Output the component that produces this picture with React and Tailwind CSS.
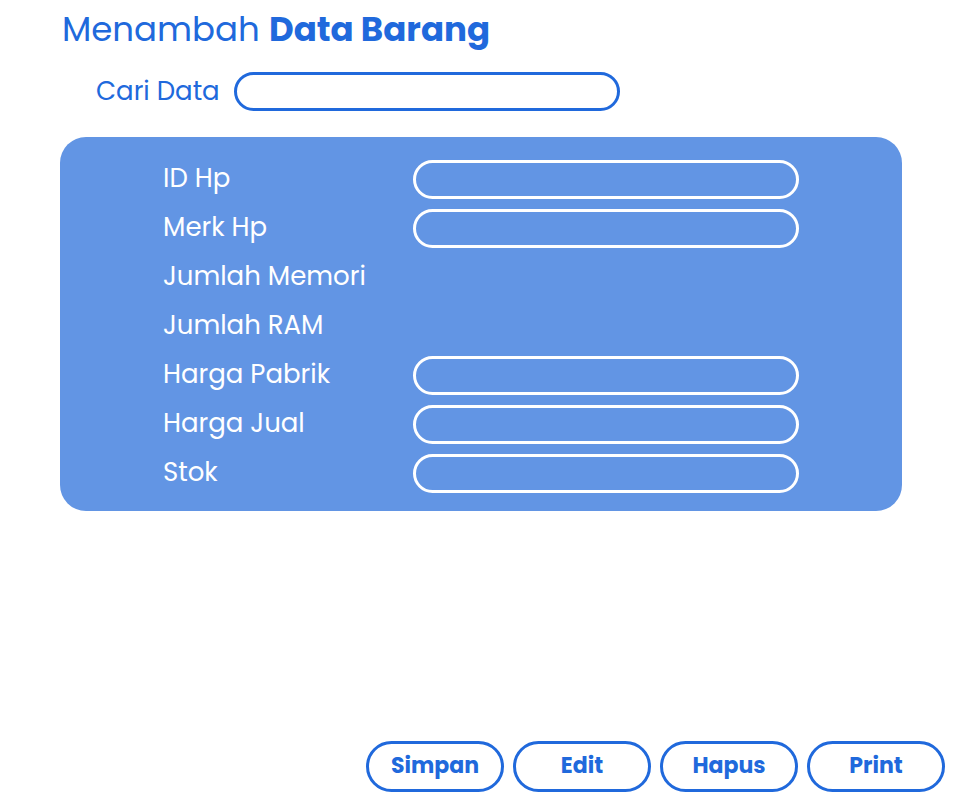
const fields = [
  { id: "id-hp", label: "ID Hp", input: true },
  { id: "merk-hp", label: "Merk Hp", input: true },
  { id: "memori", label: "Jumlah Memori", input: false },
  { id: "ram", label: "Jumlah RAM", input: false },
  { id: "harga-pabrik", label: "Harga Pabrik", input: true },
  { id: "harga-jual", label: "Harga Jual", input: true },
  { id: "stok", label: "Stok", input: true },
];

const actions = ["Simpan", "Edit", "Hapus", "Print"];

function Field({ id, label, input }) {
  return (
    <div className="grid h-[39px] grid-cols-[250px_1fr] items-center">
      {input ? (
        <>
          <label htmlFor={id} className="pb-1 text-[26px] leading-8">
            {label}
          </label>
          <input
            id={id}
            type="text"
            className="h-[39px] w-full min-w-0 rounded-[20px] border-3 border-white bg-transparent px-4 text-xl outline-none"
          />
        </>
      ) : (
        <span className="pb-1 text-[26px] leading-8">{label}</span>
      )}
    </div>
  );
}

export default function App() {
  return (
    <main className="flex min-h-screen flex-col bg-white font-['Poppins','Inter',sans-serif] text-[#2069dc]">
      <h1 className="px-[62px] pt-2 text-[34px] leading-[42px] font-normal">
        Menambah <strong className="font-bold">Data Barang</strong>
      </h1>

      <div className="mt-[22px] flex items-center pr-[60px] pl-24">
        <label htmlFor="cari" className="w-[138px] shrink-0 pb-0.5 text-[26px] leading-8">
          Cari Data
        </label>
        <input
          id="cari"
          type="search"
          className="h-[39px] w-full max-w-[386px] min-w-0 rounded-[20px] border-3 border-[#2069dc] bg-white px-4 text-xl outline-none"
        />
      </div>

      <section className="mx-[60px] mt-[26px] flex flex-col gap-[10px] rounded-[26px] bg-[#6295e4] px-[103px] pt-[23px] pb-[18px] text-white">
        {fields.map((field) => (
          <Field key={field.id} {...field} />
        ))}
      </section>

      <footer className="mt-auto flex flex-wrap justify-end gap-[9px] px-[17px] pt-8 pb-2">
        {actions.map((action) => (
          <button
            key={action}
            type="button"
            className="h-[51px] w-[138px] rounded-full border-3 border-[#2069dc] bg-white pb-0.5 text-[22px] leading-7 font-bold"
          >
            {action}
          </button>
        ))}
      </footer>
    </main>
  );
}
